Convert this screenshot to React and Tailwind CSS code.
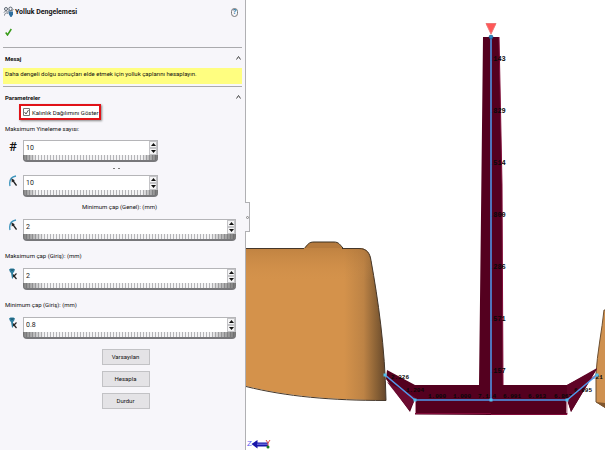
import React from 'react';

function BalanceIcon() {
  return (
    <svg className="h-3 w-3 shrink-0" viewBox="0 0 12 12" fill="none">
      <circle cx="3" cy="3" r="1.500" stroke="#5b6570" />
      <circle cx="7.500" cy="2.800" r="1.700" stroke="#5b6570" />
      <path d="M1 6.500c1-2 3-2 4 0M1.500 9.500C1.500 7 4 6 5.500 8M5 5c2 0 4 0 5.500-1.500" stroke="#6b7580" />
      <path d="M5.500 5.500h4.500v3L8.500 11h-1L6 8.500z" fill="#2f6f9f" />
    </svg>
  );
}

function DiameterIcon() {
  return (
    <svg className="h-3 w-2 shrink-0" viewBox="0 0 8 12" fill="none">
      <path d="M1 11C0 6 2 2 7 1" stroke="#3d95bd" strokeWidth="1.300" />
      <path d="M7.500 10.500L3.500 5" stroke="#222" strokeWidth="1.300" />
      <path d="M2.500 3.500l.3 4 3-2.200z" fill="#222" />
    </svg>
  );
}

function GateIcon() {
  return (
    <svg className="h-3 w-2 shrink-0" viewBox="0 0 8 12" fill="none">
      <path d="M0 1.500L1.500.5h3L6 1.500 5 4 4 5v5.500H3L2 5 1 4z" fill="#2f7f9f" />
      <path d="M1 1.500h4.500L3 3z" fill="#1b5268" />
      <path d="M7.500 11L5 8M5 8L7.500 5.500" stroke="#222" strokeWidth="1.200" />
      <path d="M4 6v3.500L6.500 8z" fill="#222" />
    </svg>
  );
}

function Caret({ down }) {
  return (
    <svg className="h-[3px] w-[5px]" viewBox="0 0 5 3">
      <path d={down ? 'M0 0h5L2.500 3z' : 'M0 3h5L2.500 0z'} fill="#111" />
    </svg>
  );
}

function SpinField({ id, label, value, icon, short }) {
  return (
    <div className="flex items-start pr-[6px]">
      <span className="flex w-5 shrink-0 justify-center">{icon}</span>
      <div className={short ? 'w-[135px]' : 'flex-1'}>
        <div className="flex h-[15px] border border-b-0 border-[#b5b5b8] bg-white">
          <input
            id={id}
            aria-label={label}
            defaultValue={value}
            className="min-w-0 flex-1 px-[2px] text-[7px] leading-[14px] text-[#222] outline-none"
          />
          <div className="flex w-2 flex-col">
            <button aria-label="Artır" className="flex flex-1 items-center justify-center border border-[#c4c4c7] bg-[#f4f4f5]">
              <Caret />
            </button>
            <button aria-label="Azalt" className="flex flex-1 items-center justify-center border border-[#c4c4c7] bg-[#f4f4f5]">
              <Caret down />
            </button>
          </div>
        </div>
        {/* thumbwheel */}
        <div className="h-[7px] rounded-b-sm border-b-2 border-[#77777a] bg-[linear-gradient(to_right,#555b,#5550_10%,#5550_88%,#555c),repeating-linear-gradient(to_right,#b5b5b8_0,#b5b5b8_1px,#f4f4f5_1px,#f4f4f5_3px)]"></div>
      </div>
    </div>
  );
}

function SectionTitle({ children }) {
  return (
    <button className="flex h-5 w-full items-center justify-between pl-[2px] pr-px text-[6px] font-bold">
      {children}
      <svg className="h-1 w-[5px]" viewBox="0 0 5 4" fill="none">
        <path d="M.5 3.500l2-3 2 3" stroke="#444" />
      </svg>
    </button>
  );
}

function PropertyPanel() {
  return (
    <aside className="relative w-[246px] shrink-0 border-r border-[#b0b0b3] bg-[#f7f6fa] px-[3px] text-[6px] text-[#111]">
      <header className="border-b border-[#aaaaad]">
        <div className="flex h-6 items-center pr-1">
          <BalanceIcon />
          <h1 className="flex-1 text-[7px] font-bold leading-3">Yolluk Dengelemesi</h1>
          <button aria-label="Yardım" className="flex h-[9px] w-[7px] items-center justify-center rounded-full border border-[#777] text-[7px] font-bold leading-[7px] text-[#26779e]">
            ?
          </button>
        </div>
        <button aria-label="Tamam" className="flex h-[23px] items-start pl-[2px] pt-1">
          <svg className="h-2 w-[7px]" viewBox="0 0 7 8" fill="none">
            <path d="M.7 4.500L2.500 7 6.300 1" stroke="#389b18" strokeWidth="1.500" />
          </svg>
        </button>
      </header>

      <section className="border-b border-[#aaaaad] pb-[2px]">
        <SectionTitle>Mesaj</SectionTitle>
        <p className="h-4 whitespace-nowrap bg-[#fffe80] pl-[2px] leading-3">
          Daha dengeli dolgu sonuçları elde etmek için yolluk çaplarını hesaplayın.
        </p>
      </section>

      <section>
        <SectionTitle>Parametreler</SectionTitle>
        <label className="ml-4 mt-[-3px] flex h-4 w-[82px] items-center gap-[2px] border-2 border-[#e11218] bg-white pl-[2px] shadow-[1px_1px_2px_#888]">
          <input type="checkbox" defaultChecked className="peer sr-only" />
          <svg className="h-2 w-[7px] shrink-0" viewBox="0 0 7 8" fill="none">
            <path d="M.5.5h6v7h-6z" stroke="#777" />
            <path d="M1.500 4l1.500 2 2.500-4" stroke="#333" strokeWidth=".8" />
          </svg>
          <span className="whitespace-nowrap">Kalınlık Dağılımını Göster</span>
        </label>
        <label htmlFor="iter" className="block h-5 pl-[2px] leading-[18px]">Maksimum Yineleme sayısı:</label>
        <SpinField id="iter" value="10" short icon={<span className="text-[13px] font-medium leading-[14px]">#</span>} />
        <div className="flex h-[13px] items-center justify-center gap-[3px] pr-3">
          <span className="h-px w-[2px] bg-[#777]"></span>
          <span className="h-px w-[2px] bg-[#777]"></span>
        </div>
        <SpinField id="max-general" label="Maksimum çap (Genel): (mm)" value="10" short icon={<DiameterIcon />} />
        <label htmlFor="min-general" className="block h-[22px] pr-[6px] text-center leading-[20px]">Minimum çap (Genel): (mm)</label>
        <SpinField id="min-general" value="2" icon={<DiameterIcon />} />
        <label htmlFor="max-gate" className="block h-[27px] pl-[2px] leading-[30px]">Maksimum çap (Giriş): (mm)</label>
        <SpinField id="max-gate" value="2" icon={<GateIcon />} />
        <label htmlFor="min-gate" className="block h-[27px] pl-[2px] leading-[30px]">Minimum çap (Giriş): (mm)</label>
        <SpinField id="min-gate" value="0.8" icon={<GateIcon />} />

        <div className="flex flex-col items-center gap-[6px] pb-10 pl-[6px] pt-[10px]">
          {['Varsayılan', 'Hesapla', 'Durdur'].map((name) => (
            <button key={name} className="h-4 w-12 border border-[#c2c2c5] bg-[#e4e3e6] leading-[14px]">
              {name}
            </button>
          ))}
        </div>
      </section>

      {/* splitter handle */}
      <button aria-label="Paneli daralt" className="absolute left-full top-[202px] flex h-[30px] w-[5px] items-center justify-center border border-l-0 border-[#b0b0b3] bg-[#f7f6fa]">
        <span className="h-[3px] w-[3px] rounded-full border border-[#888]"></span>
      </button>
    </aside>
  );
}

const stemLabels = [
  ['.143', 58],
  ['.829', 110],
  ['.514', 162],
  ['.800', 214],
  ['.286', 266],
  ['.571', 318],
  ['.157', 370],
];

const runnerLabels = [
  ['1.000', 428],
  ['1.000', 453],
  ['7.114', 478],
  ['6.991', 503],
  ['6.913', 528],
  ['6.867', 554],
];

function Viewport() {
  return (
    <main className="min-w-0 flex-1 bg-white">
      <svg className="block w-full" viewBox="246 0 359 450" role="img" aria-label="Yolluk modeli">
        <defs>
          <linearGradient id="body" x1="0" x2="1" y1="0" y2="0">
            <stop offset="0" stopColor="#d4924b" />
            <stop offset=".7" stopColor="#d4924b" />
            <stop offset=".84" stopColor="#bd8345" />
            <stop offset=".94" stopColor="#855e34" />
            <stop offset="1" stopColor="#64452b" />
          </linearGradient>
          <linearGradient id="top" x1="0" x2="0" y1="0" y2="1">
            <stop offset="0" stopColor="#a87036" stopOpacity=".45" />
            <stop offset="1" stopColor="#c98b48" stopOpacity="0" />
          </linearGradient>
        </defs>

        {/* moulded part */}
        <path d="M304 249c4-5 5-7 10-7h20c5 0 6 3 9 6v6h-39z" fill="#b57a3d" stroke="#3c3020" />
        <path d="M246 248h113c8 0 11 5 12 12 7 39 14 86 15 140-55 0-100-4-140-14z" fill="url(#body)" />
        <path d="M246 248h113c8 0 11 5 12 12l3 20H246z" fill="url(#top)" />
        <path d="M246 248.500h58M342 248.500h17c8 0 11 5 12 12 7 39 14 86 15 140-55 0-100-4-140-14" fill="none" stroke="#45372a" />
        <path d="M606 310h-2c-2 20-7 44-8 64v28l10 6z" fill="#cf9150" stroke="#6d5032" />
        <path d="M596 402l9 1v5z" fill="#80572f" />

        {/* sprue and runners */}
        <path d="M483 37h16l1 48 2 100 1 200h64l30-16-26 43-4-14v17h-76l-76-.5V399l-5 13-24-33 1-9 28 15h64l2-170z" fill="#54001f" />
        <path d="M567 385l30-17-26 44-4-12z" fill="#600427" />
        <path d="M499 37l1 48 2 100 1 200M415.500 400v13.500H491M491 414.500h76V400M415 400l-29-25M567 400l30-26" fill="none" stroke="#800b38" />
        <path d="M387 382l22 28 6-10v-3z" fill="#6b0b30" />
        <path d="M415 401v12M567 401v12" stroke="#fff" />

        <g fill="#080808" fontFamily="Liberation Mono" fontSize="7" fontWeight="bold">
          {stemLabels.map(([text, y]) => (
            <text key={y} x="489" y={y + 3}>{text}</text>
          ))}
          {runnerLabels.map(([text, x]) => (
            <text key={x} x={x} y="398" fontSize="6">{text}</text>
          ))}
          <text x="391" y="379" fontSize="6">2.326</text>
          <text x="406" y="392" fontSize="6">1.204</text>
          <text x="574" y="392" fontSize="6">6.095</text>
          <text x="592" y="379" fontSize="6">.21</text>
        </g>

        <path d="M491 37v363M385 375l30 25h152l30-25" fill="none" stroke="#4f9bee" strokeWidth="1.500" />
        <path d="M383.500 373.500h3v3h-3zM413.500 398.500h3v3h-3zM489.500 398.500h3v3h-3zM565.500 398.500h3v3h-3zM595.500 373.500h3v3h-3z" fill="#51c2ef" />
        <circle cx="491" cy="37" r="2" fill="#2787c9" stroke="#173e64" strokeWidth=".5" />
        <path d="M486 23.500h10l-5 10.500z" fill="#ff5757" stroke="#ed7777" />

        {/* view triad */}
        <text x="247" y="446" fill="#5c5cf0" fontFamily="Liberation Sans" fontSize="8">Z</text>
        <path d="M251.500 444l6-4v2.500H268v4h-10.500v2z" fill="#1616a9" />
        <path d="M257 443.500h11v1.500h-11z" fill="#6161d5" />
        <path d="M266 440l2 3 2-3M268 443v3" fill="none" stroke="#dc4b4b" />
        <circle cx="268" cy="447" r="1.500" fill="#177b22" />
      </svg>
    </main>
  );
}

function App() {
  return (
    <div className="flex min-h-screen overflow-hidden bg-white font-['Roboto','Noto_Sans',sans-serif]">
      <PropertyPanel />
      <Viewport />
    </div>
  );
}

export default App;
